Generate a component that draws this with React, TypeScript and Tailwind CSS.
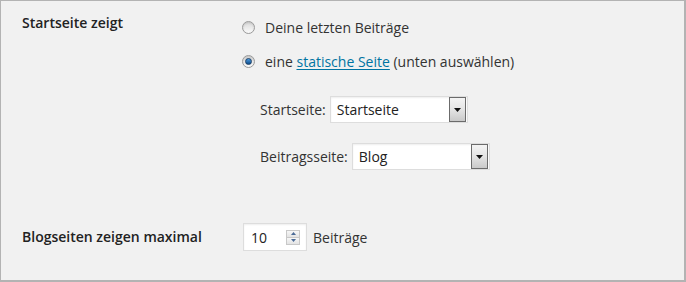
import React from "react";

function Radio({ checked }: { checked?: boolean }) {
  return (
    <span className="w-[13px] h-[13px] rounded-full border border-[#9a9a9a] bg-gradient-to-b from-[#d9d9d9] to-[#fbfbfb] flex items-center justify-center shrink-0 shadow-[inset_0_1px_2px_rgba(0,0,0,0.12)]">
      {checked && (
        <span className="w-[7px] h-[7px] rounded-full border border-[#1b3f66] bg-gradient-to-b from-[#4a9be0] to-[#0d4d8c] block" />
      )}
    </span>
  );
}

function Select({ value, width }: { value: string; width: string }) {
  return (
    <div
      className={`${width} h-[27px] bg-white border border-[#dddddd] shadow-[inset_0_1px_2px_rgba(0,0,0,0.07)] flex items-center justify-between pl-[6px] pr-[1px]`}
    >
      <span className="text-[#222] text-[14px] leading-5">{value}</span>
      <span className="w-[17px] h-[25px] border border-[#6b6b6b] bg-gradient-to-b from-[#f4f4f4] via-[#e4e4e4] to-[#c9c9c9] flex items-start justify-center pt-[10px]">
        <svg width="7" height="4" viewBox="0 0 7 4">
          <polygon points="0,0 7,0 3.5,4" fill="#111" />
        </svg>
      </span>
    </div>
  );
}

export default function App() {
  return (
    <div
      className="w-[686px] h-[282px] bg-[#f1f1f1] border-t border-l border-r-2 border-b-2 border-[#b3b3b3] text-[14px] text-[#333] box-border"
      style={{ fontFamily: '"Open Sans", "Noto Sans", sans-serif' }}
    >
      <div className="flex pt-[12px]">
        <div className="w-[242px] pl-[21px] font-semibold text-[#222] leading-5 shrink-0">
          Startseite zeigt
        </div>
        <div className="flex flex-col pt-[4px]">
          <label className="flex items-center h-5 -ml-[1px]">
            <Radio />
            <span className="ml-[10px]">Deine letzten Beiträge</span>
          </label>
          <label className="flex items-center h-5 mt-[14px] -ml-[1px]">
            <Radio checked />
            <span className="ml-[10px]">
              eine{" "}
              <a className="text-[#0074a2] underline underline-offset-2">statische Seite</a>{" "}
              (unten auswählen)
            </span>
          </label>
          <div className="flex items-center pl-[17px] mt-[25px]">
            <span className="mr-[4px]">Startseite:</span>
            <Select value="Startseite" width="w-[138px]" />
          </div>
          <div className="flex items-center pl-[17px] mt-[20px]">
            <span className="mr-[4px]">Beitragsseite:</span>
            <Select value="Blog" width="w-[138px]" />
          </div>
        </div>
      </div>
      <div className="flex items-center mt-[53px]">
        <div className="w-[242px] pl-[21px] font-semibold text-[#222] leading-5 shrink-0">
          Blogseiten zeigen maximal
        </div>
        <div className="flex items-center">
          <div className="w-[64px] h-[28px] bg-white border border-[#dddddd] shadow-[inset_0_1px_2px_rgba(0,0,0,0.07)] flex items-center justify-between pl-[7px] pr-[6px]">
            <span className="text-[#222]">10</span>
            <span className="flex flex-col w-[14px] h-[15px] border border-[#c8c8c8]">
              <span className="flex-1 bg-gradient-to-b from-[#f7f7f7] to-[#e3e3e3] flex items-center justify-center border-b border-[#c8c8c8]">
                <svg width="5" height="3" viewBox="0 0 5 3">
                  <polygon points="0,3 5,3 2.5,0" fill="#4a6a96" />
                </svg>
              </span>
              <span className="flex-1 bg-gradient-to-b from-[#f7f7f7] to-[#e3e3e3] flex items-center justify-center">
                <svg width="5" height="3" viewBox="0 0 5 3">
                  <polygon points="0,0 5,0 2.5,3" fill="#4a6a96" />
                </svg>
              </span>
            </span>
          </div>
          <span className="ml-[6px]">Beiträge</span>
        </div>
      </div>
    </div>
  );
}
